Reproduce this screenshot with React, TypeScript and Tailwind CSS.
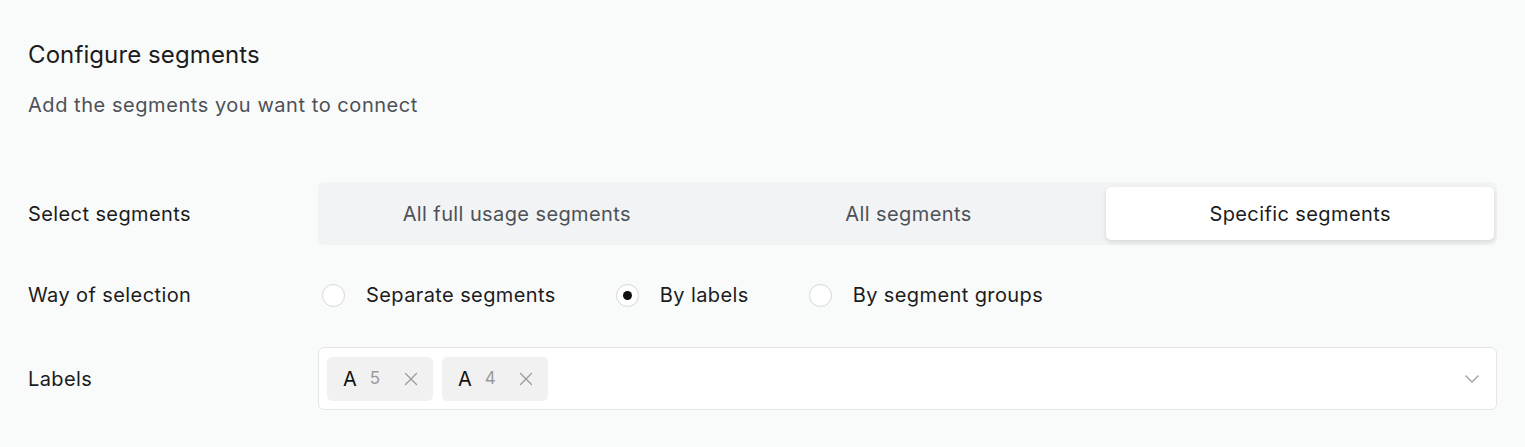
import { ChevronDown, X } from "lucide-react";

const tabs = ["All full usage segments", "All segments", "Specific segments"];
const ways = ["Separate segments", "By labels", "By segment groups"];
const labels = [
  { name: "A", count: 5 },
  { name: "A", count: 4 },
];

export default function App() {
  return (
    <div
      className="h-[447px] w-full bg-[#f9fafa] px-[28px] pt-[41px] text-[20px] tracking-[0.4px] text-[#1c1c1c]"
      style={{ fontFamily: "Inter, 'Noto Sans', sans-serif" }}
    >
      {/* Header */}
      <h1 className="text-[24px] leading-[28px] tracking-[0.1px]">Configure segments</h1>
      <p className="mt-[22px] leading-[28px] tracking-[0.55px] text-[#4d5157]">
        Add the segments you want to connect
      </p>

      {/* Select segments */}
      <div className="mt-[63px] flex items-center">
        <div className="w-[290px]">Select segments</div>
        <div className="flex h-[63px] flex-1 items-center gap-[4px] rounded-[6px] bg-[#f2f3f5] py-[5px] pl-[5px] pr-[3px]">
          {tabs.map((t, i) => (
            <div
              key={t}
              className={
                i === 2
                  ? "flex h-[53px] flex-1 items-center justify-center rounded-[5px] bg-white shadow-[0_2px_5px_rgba(0,0,0,0.12)]"
                  : "flex h-[53px] flex-1 items-center justify-center text-[#4d5157]"
              }
            >
              {t}
            </div>
          ))}
        </div>
      </div>

      {/* Way of selection */}
      <div className="mt-[36px] flex h-[28px] items-center">
        <div className="w-[290px]">Way of selection</div>
        <div className="flex items-center pl-[4px]">
          {ways.map((w, i) => (
            <div key={w} className="mr-[60px] flex items-center">
              <span className="flex h-[23px] w-[23px] items-center justify-center rounded-full border border-[#d4d6d9] bg-white">
                {i === 1 && <span className="h-[9px] w-[9px] rounded-full bg-[#111]" />}
              </span>
              <span className="ml-[21px]">{w}</span>
            </div>
          ))}
        </div>
      </div>

      {/* Labels */}
      <div className="mt-[38px] flex items-center">
        <div className="w-[290px]">Labels</div>
        <div className="flex h-[63px] flex-1 items-center gap-[9px] rounded-[6px] border border-[#e3e5e7] bg-white pl-[8px] pr-[12px]">
          {labels.map((l, i) => (
            <div
              key={i}
              className="flex h-[44px] w-[106px] items-center rounded-[5px] bg-[#f1f1f1] pl-[16px]"
            >
              <span className="text-[20px] tracking-normal text-[#111]">{l.name}</span>
              <span className="ml-[13px] text-[17px] text-[#9a9a9a]">{l.count}</span>
              <X className="ml-[19px] text-[#9a9a9a]" size={22} strokeWidth={1.4} />
            </div>
          ))}
          <div className="flex-1" />
          <ChevronDown className="text-[#a0a0a0]" size={24} strokeWidth={1.4} />
        </div>
      </div>
    </div>
  );
}
